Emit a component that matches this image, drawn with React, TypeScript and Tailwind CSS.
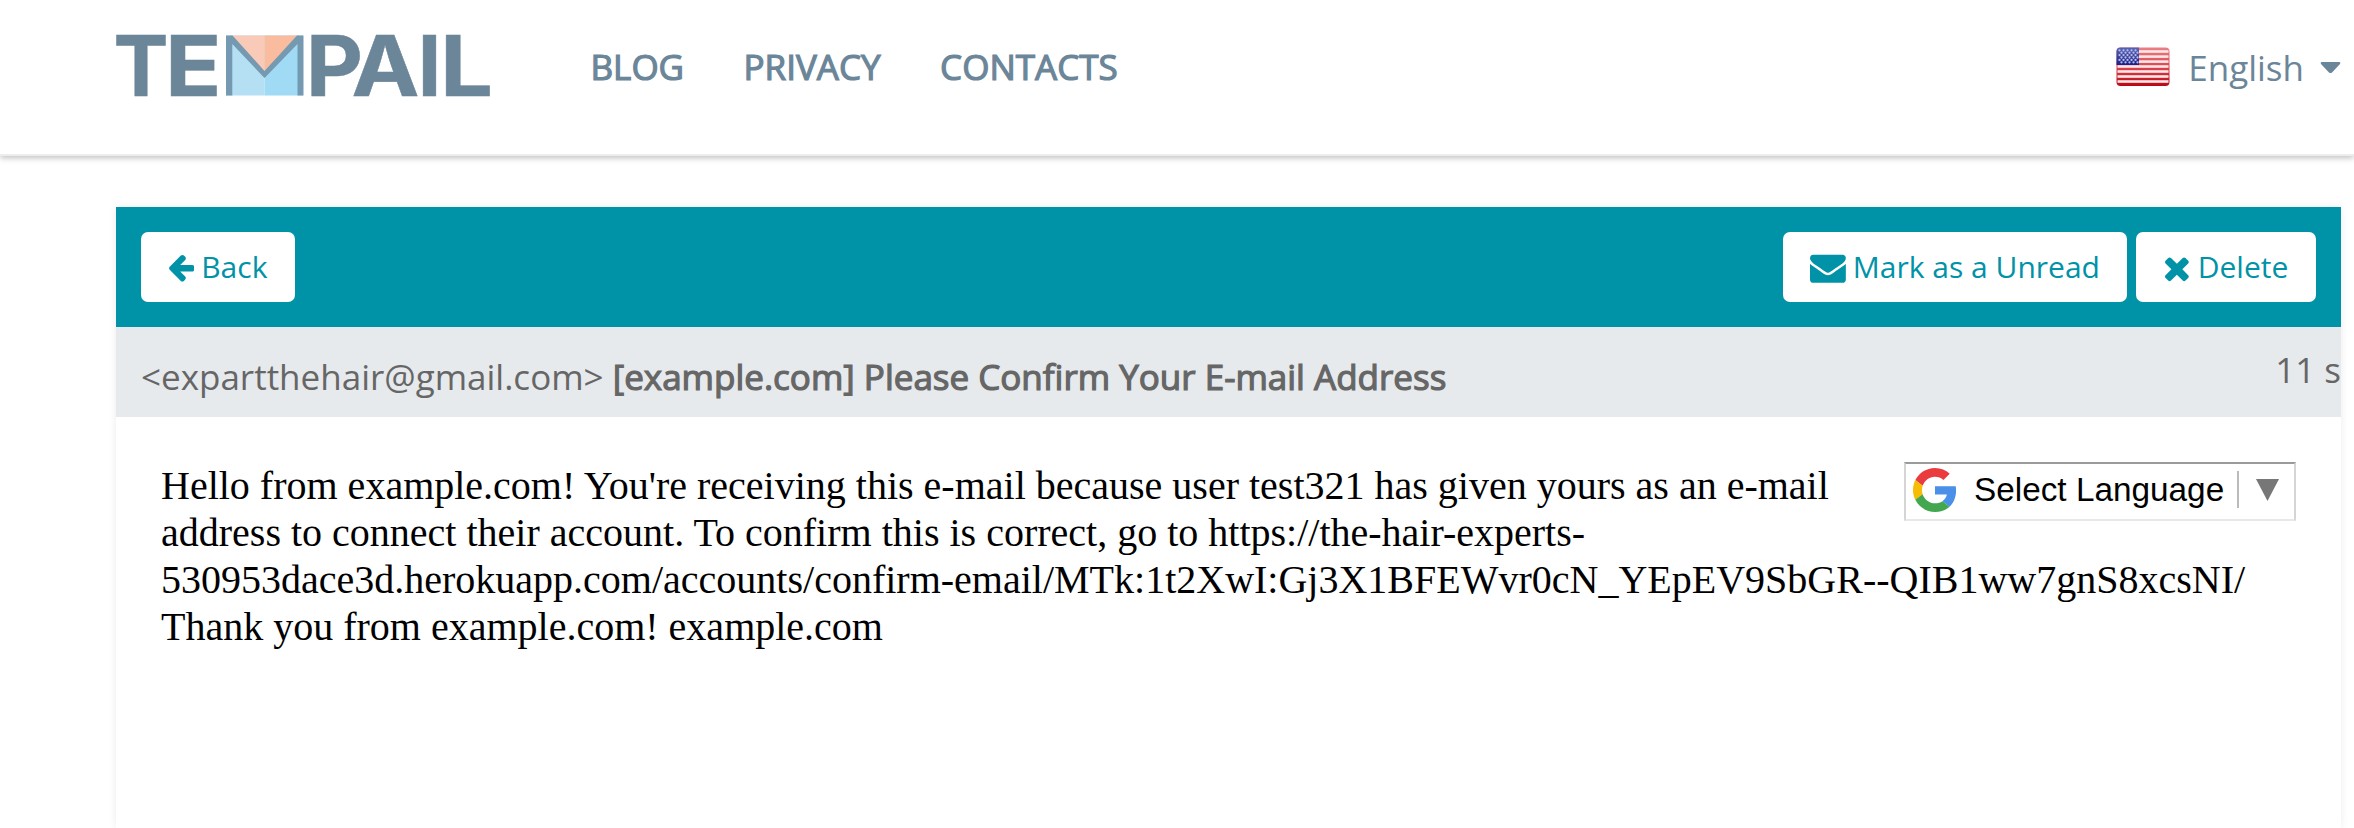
import React from "react";

const icons = {
  arrow:
    "M1664 896v128q0 53-32.5 90.5t-84.5 37.5h-704l293 294q38 36 38 90t-38 90l-75 76q-37 37-90 37-52 0-91-37l-651-652q-37-37-37-90 0-52 37-91l651-650q38-38 91-38 52 0 90 38l75 74q38 38 38 91t-38 91l-293 293h704q52 0 84.5 37.5t32.5 90.5z",
  envelope:
    "M1792 710v794q0 66-47 113t-113 47h-1472q-66 0-113-47t-47-113v-794q44 49 101 87 362 246 497 345 57 42 92.5 65.5t94.5 48 110 24.5h2q51 0 110-24.5t94.5-48 92.5-65.5q170-123 498-345 57-39 100-87zm0-294q0 79-49 151t-122 123q-376 261-468 325-10 7-42.5 31t-54 38.5-52 32.5-57.5 27-50 9h-2q-23 0-50-9t-57.5-27-52-32.5-54-38.5-42.5-31q-91-64-262-182.5t-205-142.5q-62-42-117-115.5t-55-136.5q0-78 41.5-130t118.5-52h1472q65 0 112.5 47t47.5 113z",
  times:
    "M1490 1322q0 40-28 68l-136 136q-28 28-68 28t-68-28l-294-294-294 294q-28 28-68 28t-68-28l-136-136q-28-28-28-68t28-68l294-294-294-294q-28-28-28-68t28-68l136-136q28-28 68-28t68 28l294 294 294-294q28-28 68-28t68 28l136 136q28 28 28 68t-28 68l-294 294 294 294q28 28 28 68z",
};

function Logo() {
  return (
    <svg width="396" height="110" viewBox="-10 -22 396 110" className="shrink-0" aria-label="Tempail">
      <g fill="#6b8599" stroke="#6b8599" strokeWidth="0.5" fontFamily="Inter" fontWeight="700" fontSize="84">
        <text x="-2.500" y="62.5" textLength="55" lengthAdjust="spacingAndGlyphs">T</text>
        <text x="49" y="62.5" textLength="56.500" lengthAdjust="spacingAndGlyphs">E</text>
        <text x="190" y="62.5" textLength="57" lengthAdjust="spacingAndGlyphs">P</text>
        <text x="235.500" y="62.5" textLength="68" lengthAdjust="spacingAndGlyphs">A</text>
        <text x="301.500" y="62.5" textLength="24" lengthAdjust="spacingAndGlyphs">I</text>
        <text x="324" y="62.5" textLength="53" lengthAdjust="spacingAndGlyphs">L</text>
      </g>
      <path d="M110 2.500h38.700v60H110z" fill="#b5e0f4" />
      <path d="M148.700 2.500H187v60h-38.300z" fill="#a1daf4" />
      <path d="M114 2.500h34.700v38z" fill="#f9cab7" />
      <path d="M148.700 2.500H183l-34.300 38z" fill="#f9bc9e" />
      <path d="M110 2.500h6.500L148.500 38 181 2.500h6.500v60h-6V11L148.500 45 116.300 11v51.500H110z" fill="#7499b0" />
    </svg>
  );
}

function Flag() {
  const rows = [0, 1, 2, 3, 4, 5];
  const columns = [0, 1, 2, 3, 4];
  return (
    <svg width="54" height="40" viewBox="0 0 54 40" className="shrink-0">
      <defs>
        <linearGradient id="red" x1="0" y1="0" x2="0" y2="1">
          <stop offset="0" stopColor="#ea8286" />
          <stop offset="0.5" stopColor="#dc4450" />
          <stop offset="1" stopColor="#b80512" />
        </linearGradient>
        <linearGradient id="blue" x1="0" y1="0" x2="0" y2="1">
          <stop offset="0" stopColor="#5a66b8" />
          <stop offset="1" stopColor="#18208c" />
        </linearGradient>
        <clipPath id="rounded">
          <rect x="0.500" y="0.500" width="53" height="38.500" rx="4" />
        </clipPath>
      </defs>
      <g clipPath="url(#rounded)">
        <rect width="54" height="40" fill="url(#red)" />
        {[3.2, 8.3, 13.3, 18.2, 23.2, 28.2, 33.2].map((y) => (
          <rect key={y} x="1.500" y={y} width="51" height="2.600" fill="#fbe6e7" />
        ))}
        <rect width="23" height="18" fill="url(#blue)" />
        {rows.map((r) =>
          columns.map((c) => (
            <circle key={`${r}-${c}`} cx={3.5 + c * 4 + (r % 2) * 2} cy={3.3 + r * 2.4} r="1.15" fill="#b9bde4" />
          )),
        )}
      </g>
    </svg>
  );
}

function GoogleG() {
  return (
    <svg width="44" height="44" viewBox="0 0 48 48" className="shrink-0">
      <path fill="#ea3b3f" d="M24 9.500c3.540 0 6.710 1.220 9.210 3.600l6.850-6.850C35.900 2.380 30.470 0 24 0 14.620 0 6.510 5.380 2.560 13.220l7.980 6.190C12.430 13.720 17.740 9.500 24 9.500z" />
      <path fill="#4a8fe8" d="M46.980 24.550c0-1.570-.150-3.090-.380-4.550H24v9.020h12.940c-.580 2.960-2.260 5.480-4.780 7.180l7.730 6c4.510-4.180 7.090-10.360 7.090-17.650z" />
      <path fill="#f6bd04" d="M10.530 28.590c-.480-1.450-.760-2.990-.760-4.590s.270-3.140.760-4.590l-7.980-6.190C.920 16.460 0 20.120 0 24c0 3.880.920 7.540 2.560 10.780l7.970-6.190z" />
      <path fill="#43a750" d="M24 48c6.480 0 11.930-2.130 15.890-5.810l-7.730-6c-2.150 1.450-4.920 2.300-8.160 2.300-6.260 0-11.570-4.220-13.470-9.910l-7.980 6.190C6.510 42.620 14.620 48 24 48z" />
    </svg>
  );
}

function Button({ icon, box, label, className }: { icon: string; box: string; label: string; className: string }) {
  return (
    <button className={`flex h-[70px] items-center rounded-[7px] bg-white text-[30px] leading-[70px] text-[#0092a7] ${className}`}>
      <svg viewBox={box} className="h-full w-auto shrink-0" fill="currentColor">
        <path d={icon} />
      </svg>
      <span className="whitespace-nowrap">{label}</span>
    </button>
  );
}

export default function App() {
  return (
    <div className="flex h-[828px] w-[2354px] flex-col overflow-hidden bg-white font-['Open_Sans',sans-serif]">
      <header className="flex h-[156px] shrink-0 items-start border-b-2 border-[#ededed] pl-[106px] text-[35px] text-[#6b8599] shadow-[0_2px_6px_rgba(0,0,0,0.25)]">
        <div className="pt-[11px]">
          <Logo />
        </div>
        <nav className="ml-[88.5px] flex gap-[59.5px] pt-[37px] leading-[60px] [-webkit-text-stroke:1.2px_currentColor]">
          <a>BLOG</a>
          <a>PRIVACY</a>
          <a>CONTACTS</a>
        </nav>
        <div className="ml-auto flex items-start pr-[13px]">
          <div className="pt-[47px]">
            <Flag />
          </div>
          <span className="ml-[18px] pt-[38px] leading-[60px]">English</span>
          <svg width="21" height="12" viewBox="0 0 21 12" className="mt-[62px] ml-[16px]">
            <path d="M1.500 0h18q1.500.500.500 2l-8 8.500q-1.500 1-3 0L1 2Q0 .500 1.500 0z" fill="#6b8599" />
          </svg>
        </div>
      </header>

      <main className="mt-[51px] mr-[13px] ml-[116px] flex grow flex-col shadow-[0_0_8px_rgba(0,0,0,0.08)]">
        <div className="flex h-[120px] shrink-0 items-center bg-[#0092a7] px-[25px]">
          <Button icon={icons.arrow} box="128 -1163 1536 4100" label="Back" className="w-[154px] gap-[7px] pl-[27px]" />
          <div className="ml-auto flex gap-[9px]">
            <Button icon={icons.envelope} box="0 -880 1792 3500" label="Mark as a Unread" className="w-[344px] gap-[7px] pl-[27px]" />
            <Button icon={icons.times} box="302 -905 1238 3500" label="Delete" className="w-[180px] gap-2 pl-[29px]" />
          </div>
        </div>
        <div className="flex h-[90px] shrink-0 items-start justify-between bg-[#e6eaed] pl-[25px] text-[35px] leading-[60px] whitespace-nowrap text-[#666]">
          <div className="pt-5">
            &lt;expartthehair@gmail.com&gt;{" "}
            <span className="[-webkit-text-stroke:1.2px_currentColor]">[example.com] Please Confirm Your E-mail Address</span>
          </div>
          <div className="pt-[13px]">11 s</div>
        </div>
        <div className="flow-root px-[45px] pt-[45px] font-['Liberation_Serif',serif] text-[40px] leading-[47px] text-black">
          <div className="float-right ml-5 flex h-[59px] w-[392px] items-center border-2 border-t-[#9b9b9b] border-r-[#d5d5d5] border-b-[#e8e8e8] border-l-[#d5d5d5] pb-1 pl-[7px] font-['Liberation_Sans',sans-serif] text-[33.33px]">
            <GoogleG />
            <span className="ml-[17px] whitespace-nowrap">Select Language</span>
            <span className="ml-[13px] h-[37px] w-[2px] bg-[#bbb]" />
            <svg width="23" height="22" viewBox="0 0 23 22" className="ml-[17px]">
              <path d="M0 0h23L11.500 22z" fill="#777" />
            </svg>
          </div>
          <p>
            Hello from example.com! You're receiving this e-mail because user test321 has given yours as an e-mail
            <br />
            address to connect their account. To confirm this is correct, go to https://the-hair-experts-
            <br />
            530953dace3d.herokuapp.com/accounts/confirm-email/MTk:1t2XwI:Gj3X1BFEWvr0cN_YEpEV9SbGR--QIB1ww7gnS8xcsNI/
            <br />
            Thank you from example.com! example.com
          </p>
        </div>
      </main>
    </div>
  );
}
